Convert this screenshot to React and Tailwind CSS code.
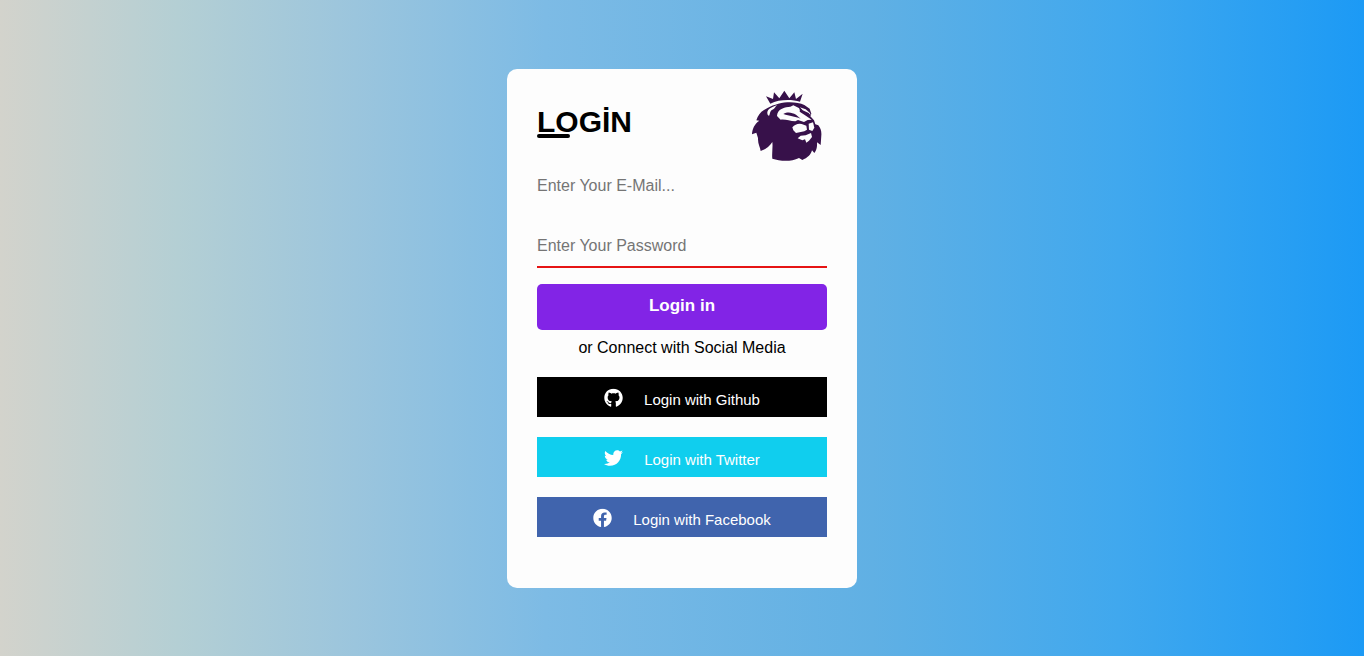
import { FaGithub, FaTwitter, FaFacebook } from "react-icons/fa";

function Lion() {
  return (
    <svg viewBox="0 0 285 270" className="h-[90px] w-[95px] shrink-0" aria-hidden="true">
      <g fill="#37114a">
        <path d="M91 71 L78 49 L99 57 L102 37 L118 55 L133 32 L148 55 L163 37 L168 57 L188 41 L180 65 C154 58 117 58 91 71Z" />
        <path d="M76 88 C93 77 118 69 142 67 C162 66 180 69 193 75 L209 86 L214 101 L211 109 L222 121 L226 133 L235 136 C242 145 245 154 244 166 L242 195 L231 187 C232 202 229 211 223 219 L216 211 C213 224 202 234 187 240 L177 234 C151 247 119 243 97 236 C95 220 99 204 97 186 C90 198 77 208 62 213 C61 203 53 192 54 174 L49 158 L36 163 C37 147 43 132 58 122 L49 121 C54 105 63 94 76 88Z" />
      </g>
      <g fill="#fdfdfd">
        <path d="M83 104 C78 91 90 82 112 75 C103 82 106 85 97 89 C89 93 91 100 87 108Z" />
        <path d="M112 101 C119 84 134 82 151 80 L160 76 L181 86 L179 95 L193 104 L215 119 L203 120 L192 126 L174 120 L166 124 C149 123 136 117 122 119 L111 108Z" />
        <path d="M179 82 L197 88 L209 98 L212 104 L193 98Z" />
        <path d="M157 142 C166 132 178 129 191 134 L199 137 L201 149 L193 154 L168 159 L160 151Z" />
        <path d="M206 131 L219 127 L223 143 L217 153 L207 149Z" />
        <path d="M173 175 L182 167 L197 166 L213 159 L216 171 L207 182 L199 188 L195 178 L187 181Z" />
      </g>
      <path d="M130 102 C144 94 156 98 168 104 L182 116 C164 108 149 109 130 102Z" fill="#37114a" />
      <path d="M176 78 L188 91 L206 99 L211 106 L191 100 L180 93Z" fill="#37114a" />
    </svg>
  );
}

function SocialButton({ icon: Icon, label, className }) {
  return (
    <button className={`flex h-10 w-full items-center justify-center text-[15px] text-white ${className}`}>
      <Icon className="mr-[21px] size-[19px] translate-y-[1.5px]" />
      <span className="pt-[5px] leading-[17px]">{label}</span>
    </button>
  );
}

export default function App() {
  return (
    <main className="flex h-screen items-center justify-center bg-[linear-gradient(90deg,#d3d3cc_0%,#b4cfd4_13%,#9bc5dd_26%,#7dbbe5_40%,#60b0e4_64%,#40a8ee_82%,#1c9af5_100%)] font-['Liberation_Sans',Arial,sans-serif]">
      <section className="h-[519px] w-[350px] rounded-[10px] bg-[#fdfdfd] px-[30px]">
        <header className="flex h-[97px] items-start justify-between">
          <h1 className="relative mt-[35px] text-[30px] leading-[36px] font-bold text-black">
            LOGİN
            <span className="absolute top-[30px] left-0 h-1 w-[33px] rounded-full bg-black" />
          </h1>
          <div className="-mr-2 pt-[11px]">
            <Lion />
          </div>
        </header>
        <input type="email" placeholder="Enter Your E-Mail..." className="block h-10 w-full text-base outline-none placeholder:text-[#757575]" />
        <input type="password" placeholder="Enter Your Password" className="mt-5 block h-[42px] w-full border-b-2 border-[#e61414] text-base outline-none placeholder:text-[#757575]" />
        <button className="mt-4 block h-[46px] w-full rounded-[5px] bg-[#8224e6] pb-px text-[17px] font-bold text-white">Login in</button>
        <p className="mt-2 text-center text-base leading-5 text-black">or Connect with Social Media</p>
        <div className="mt-[19px] flex flex-col gap-5">
          <SocialButton icon={FaGithub} label="Login with Github" className="bg-black" />
          <SocialButton icon={FaTwitter} label="Login with Twitter" className="bg-[#10ceee]" />
          <SocialButton icon={FaFacebook} label="Login with Facebook" className="bg-[#4064ad]" />
        </div>
      </section>
    </main>
  );
}
